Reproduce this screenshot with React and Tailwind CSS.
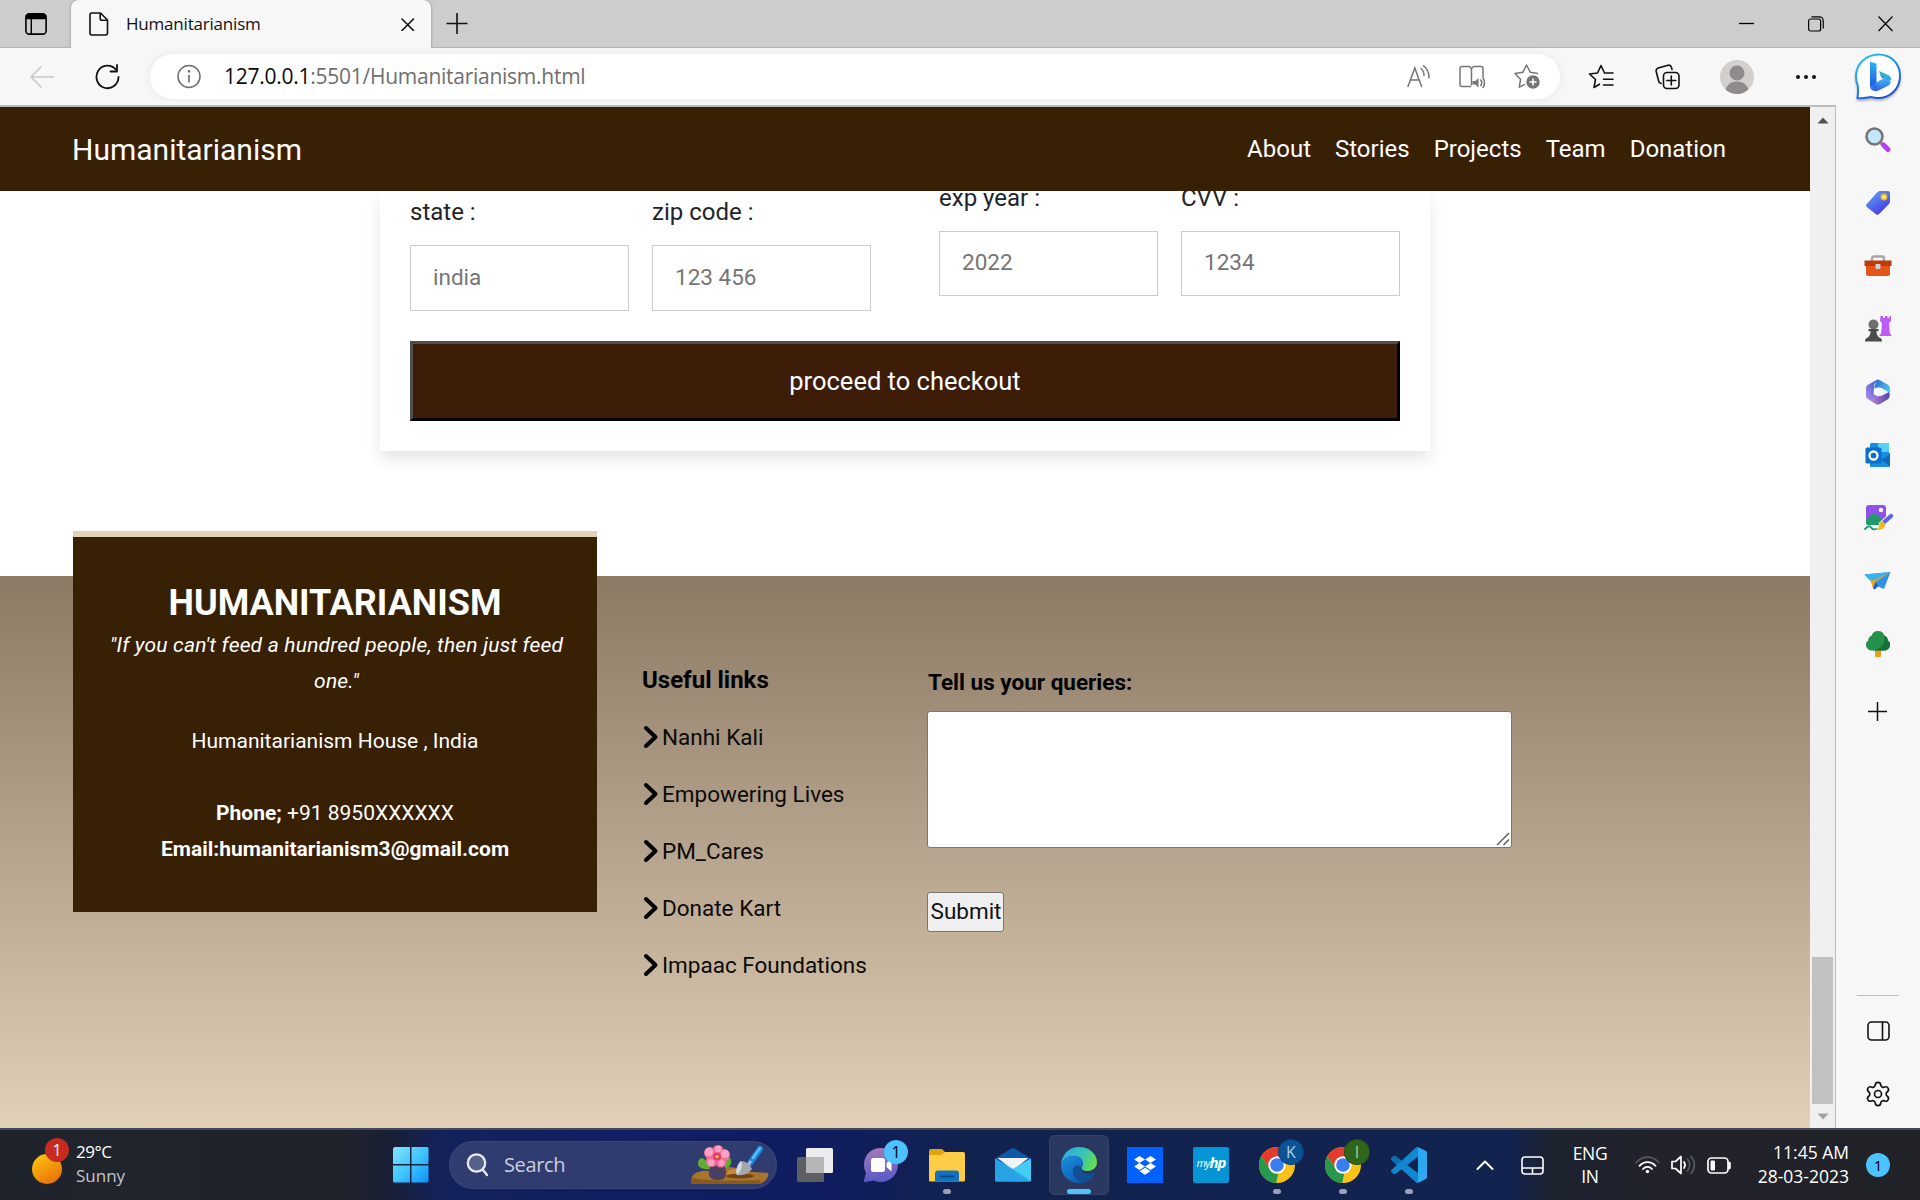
import React from "react";
import { Settings } from "lucide-react";

/* ---------- browser chrome ---------- */

function TabStrip() {
  return (
    <div className="flex h-12 shrink-0 bg-[#cdcdcd]">
      <div className="flex w-[71px] items-center pl-[25px] shadow-[inset_0_-2px_1px_-1px_#b4b4b4]">
        <svg width="22" height="22" viewBox="0 0 22 22" fill="none">
          <rect x="0.9" y="0.9" width="20.2" height="20.2" rx="3.4" stroke="#000" strokeWidth="1.6" />
          <path d="M0.9 6.2V4.3A3.4 3.4 0 0 1 4.3.9h13.4a3.4 3.4 0 0 1 3.4 3.4v1.9z" fill="#000" />
          <path d="M6.3 6v15" stroke="#000" strokeWidth="1.4" />
        </svg>
      </div>
      <div className="flex w-[360px] items-center rounded-t-[8px] bg-[#f7f7f7] pl-[18px] shadow-[0_0_3px_rgba(0,0,0,0.35)] [clip-path:inset(0_-4px_0_-4px)]">
        <svg width="20" height="24" viewBox="0 0 20 24" fill="none" stroke="#111" strokeWidth="1.6" strokeLinejoin="round">
          <path d="M1 3a2 2 0 0 1 2-2h8.5L18.5 8v13a2 2 0 0 1-2 2H3a2 2 0 0 1-2-2z" />
          <path d="M11.2 1v5.400a1.800 1.800 0 0 0 1.800 1.800h5.500" />
        </svg>
        <span className="ml-[17px] w-[275px] text-[17px] leading-6 tracking-[-0.2px] text-[#111]">Humanitarianism</span>
        <svg width="14" height="14" viewBox="0 0 14 14" stroke="#111" strokeWidth="1.6" strokeLinecap="round">
          <path d="M1 2l11.5 11.500M12.500 2L1 13.500" />
        </svg>
      </div>
      <div className="flex grow items-center pl-[15px] shadow-[inset_0_-2px_1px_-1px_#b4b4b4]">
        <svg width="22" height="22" viewBox="0 0 22 22" stroke="#111" strokeWidth="1.6">
          <path d="M11 0v21M0.500 10.500h21" />
        </svg>
        <div className="ml-auto flex items-center pr-[27px]">
          <svg className="mr-[54px]" width="15" height="16" viewBox="0 0 15 16" stroke="#000" strokeWidth="1.3">
            <path d="M0 7.500h15" />
          </svg>
          <svg className="mr-[54px]" width="16" height="16" viewBox="0 0 16 16" fill="none" stroke="#000" strokeWidth="1.2">
            <rect x="0.600" y="3" width="12" height="12" rx="2" />
            <path d="M3.500 .8h8a3.700 3.700 0 0 1 3.700 3.700v8" />
          </svg>
          <svg width="15" height="16" viewBox="0 0 15 16" stroke="#000" strokeWidth="1.2">
            <path d="M0.500 .5l14 14.500M14.500 .5L0.500 15" />
          </svg>
        </div>
      </div>
    </div>
  );
}

function BingLogo() {
  return (
    <svg width="49" height="50" viewBox="0 0 49 50" fill="none" className="drop-shadow-[0_2px_1px_rgba(0,0,0,0.25)]">
      <defs>
        <linearGradient id="bingRing" x1="0.1" y1="0" x2="0.700" y2="1">
          <stop offset="0" stopColor="#28c9ef" />
          <stop offset="0.600" stopColor="#2480ea" />
          <stop offset="1" stopColor="#1b50d0" />
        </linearGradient>
        <linearGradient id="bingB" x1="0" y1="0" x2="0" y2="1">
          <stop offset="0" stopColor="#2fb4f5" />
          <stop offset="1" stopColor="#1c4fe0" />
        </linearGradient>
        <linearGradient id="bingLeaf" x1="0" y1="1" x2="1" y2="0">
          <stop offset="0" stopColor="#2a7bf0" />
          <stop offset="1" stopColor="#38dfc6" />
        </linearGradient>
      </defs>
      <path
        d="M24.500 1.500C37 1.500 46 10.500 46 23S36.500 45 24 45c-3 0-5-.4-7-1-5 1-9 1.500-13.500 1 .8-5 1-7 .3-12C2.800 30 2 27 2 23.500 2 11 12 1.500 24.500 1.500z"
        fill="#fff"
        stroke="url(#bingRing)"
        strokeWidth="2"
      />
      <path d="M16 8.500l6.500 2.300V36L16 33z" fill="url(#bingB)" />
      <path d="M25 18l9.500 4c2 1 3 3 2.500 5.500L29 25.500 27 24z" fill="url(#bingLeaf)" />
      <path d="M16 33l8 -4.500 7-4 4 2c2.200 1.300 2 4.500-.5 6L24.500 37.500c-4 2-8.500-.5-8.500-4.500z" fill="url(#bingB)" opacity="0.9" />
    </svg>
  );
}

function Toolbar() {
  return (
    <div className="shrink-0 bg-[#f7f7f7]">
      <div className="flex h-[57px] items-center">
        <div className="flex w-[150px] items-center pl-[30px]">
          <svg width="24" height="22" viewBox="0 0 24 22" fill="none" stroke="#c9c9c9" strokeWidth="1.7" strokeLinecap="round" strokeLinejoin="round">
            <path d="M11 1L1 11l10 10M1 11h22.500" />
          </svg>
          <svg className="ml-[41px]" width="25" height="26" viewBox="0 0 25 26" fill="none" stroke="#111" strokeWidth="1.8" strokeLinecap="round">
            <path d="M23.500 13A11 11.300 0 1 1 20.800 5.500" />
            <path d="M22 1v6.500h-6.500" strokeLinejoin="round" />
          </svg>
        </div>
        <div className="flex h-[45px] w-[1410px] items-center rounded-full bg-white pl-[27px] pr-[20px] shadow-[0_0_8px_rgba(0,0,0,0.07)]">
          <svg width="24" height="25" viewBox="0 0 24 25" fill="none" stroke="#6e6e6e" strokeWidth="1.5">
            <circle cx="12" cy="12.500" r="11" />
            <path d="M12 11v7.500" strokeWidth="1.7" />
            <circle cx="12" cy="7.300" r="0.600" fill="#6e6e6e" />
          </svg>
          <p className="mb-px ml-[23px] text-[21px] leading-8 tracking-[-0.26px] text-[#6f6f6f]">
            <span className="text-[#0a0a0a]">127.0.0.1</span>:5501/Humanitarianism.html
          </p>
          <div className="ml-auto flex items-center gap-[28px]">
            <svg width="24" height="23" viewBox="0 0 24 23" fill="none" stroke="#757575" strokeWidth="1.500" strokeLinecap="round">
              <path d="M1 21.500L7.800 3l6.800 18.500M3.500 15h8.700" />
              <path d="M14 3.500c2 1.500 3 4 3 7M16.500 .8c4 2.500 5.500 7 5.500 12" />
            </svg>
            <svg width="27" height="24" viewBox="0 0 27 24" fill="none" stroke="#757575" strokeWidth="1.500" strokeLinejoin="round">
              <path d="M12 21.500H3a2 2 0 0 1-2-2v-16a2 2 0 0 1 2-2h7.500l2 2 2-2H22a2 2 0 0 1 2 2v9M12.500 3.500v17" />
              <path d="M13.500 16h2.800l3.200-3v9.500l-3.200-3h-2.800z" fill="#757575" stroke="none" />
              <path d="M21.800 15c1.200 1.500 1.200 4 0 5.500M24 13c2 2.700 2 7 0 9.500" strokeLinecap="round" />
            </svg>
            <svg width="26" height="25" viewBox="0 0 26 25" fill="none" stroke="#757575" strokeWidth="1.500" strokeLinejoin="round">
              <path d="M24 9.500l-7.700-1.200L12.500 1 8.800 8.300.9 9.500l5.700 5.700-1.300 8L11 20.300" />
              <circle cx="19" cy="18" r="6.700" fill="#757575" stroke="none" />
              <path d="M19 14.500v7M15.500 18h7" stroke="#fff" />
            </svg>
          </div>
        </div>
        <div className="flex grow items-center pl-[28px]">
          <svg width="27" height="25" viewBox="0 0 27 25" fill="none" stroke="#111" strokeWidth="1.600" strokeLinejoin="round" strokeLinecap="round">
            <path d="M16.500 9L13 1.500 9.500 9 1.500 10l6 5.500L6 23.500l5.500-3.300M16.500 9H25M15.500 15.200H25M15.500 21H25" />
          </svg>
          <svg className="ml-[40px]" width="26" height="26" viewBox="0 0 26 26" fill="none" stroke="#111" strokeWidth="1.600" strokeLinecap="round">
            <path d="M6 19.500c-1.300-.3-2-1-2.300-2.200L1.200 7.500c-.4-1.800.4-3 2-3.500L13 1.300c1.700-.4 2.900.3 3.400 2L17 5.500" />
            <rect x="8.500" y="8.500" width="15.500" height="16" rx="3.500" />
            <path d="M16.300 12v9M11.800 16.500h9" />
          </svg>
          <svg className="ml-[39px]" width="34" height="34" viewBox="0 0 34 34">
            <defs>
              <clipPath id="avatarClip">
                <circle cx="17" cy="17" r="17" />
              </clipPath>
            </defs>
            <g clipPath="url(#avatarClip)">
              <rect width="34" height="34" fill="#d2d0ce" />
              <circle cx="17" cy="13" r="7.500" fill="#8f8b88" />
              <path d="M5 34c0-8 5-12.500 12-12.500S29 26 29 34z" fill="#8f8b88" />
            </g>
          </svg>
          <svg className="ml-[41px]" width="22" height="6" viewBox="0 0 22 6" fill="#111">
            <circle cx="3" cy="3" r="2" />
            <circle cx="11" cy="3" r="2" />
            <circle cx="19" cy="3" r="2" />
          </svg>
          <div className="-my-2 ml-[37px] translate-y-[1px]">
            <BingLogo />
          </div>
        </div>
      </div>
      <div className="h-[2px] w-[1836px] bg-[#bcbcbc]" />
    </div>
  );
}

/* ---------- edge sidebar ---------- */

const sideIcons = [
  <svg key="search" width="28" height="28" viewBox="0 0 28 28" fill="none">
    <path d="M17 17l4 4" stroke="#6b6b6b" strokeWidth="3" />
    <path d="M19.500 19l4.500 4.500" stroke="#b83df5" strokeWidth="5" strokeLinecap="round" />
    <circle cx="10.500" cy="10.500" r="8" fill="#c4e6fa" stroke="#767676" strokeWidth="2.600" />
  </svg>,
  <svg key="tag" width="28" height="28" viewBox="0 0 28 28" fill="none">
    <defs>
      <linearGradient id="tagG" x1="0" y1="0" x2="0.700" y2="1">
        <stop offset="0" stopColor="#62b0fb" />
        <stop offset="1" stopColor="#4435e0" />
      </linearGradient>
    </defs>
    <path d="M13 3.500c1-.8 2-1.500 3.500-1.500H24a2 2 0 0 1 2 2v8c0 1.500-.5 2.500-1.500 3.500L15 25c-1 1-2 1-3 .2L2.800 18c-1-.9-1-2.200 0-3z" fill="url(#tagG)" />
    <circle cx="20" cy="8" r="2.600" fill="#fff1a0" stroke="#f3bd1b" strokeWidth="1.700" />
  </svg>,
  <svg key="toolbox" width="28" height="28" viewBox="0 0 28 28" fill="none">
    <path d="M8 9V6.500a2 2 0 0 1 2-2h8a2 2 0 0 1 2 2V9" stroke="#a5a5a5" strokeWidth="2.400" />
    <rect x="2" y="12" width="24" height="12" rx="2" fill="#e5541b" />
    <path d="M0.500 8.500h27V14H.5z" fill="#bf3a0d" />
    <rect x="11.500" y="12" width="5" height="5" rx="1" fill="#d4d4d4" />
  </svg>,
  <svg key="games" width="28" height="28" viewBox="0 0 28 28" fill="none">
    <path d="M16.500 1h2.500v2h2V1h2.500v2h2V1H27v5l-2 2 .8 10 1.700 2.500V21H15.500v-.5l1.700-2.500.8-10-2-2z" fill="#bb5cf5" />
    <circle cx="9.500" cy="9.500" r="5" fill="#6e6e6e" />
    <path d="M4.500 14h10v2.200h-2.200c.2 3 1.200 4.800 3.200 6.800h-12c2-2 3-3.800 3.200-6.800H4.500zM1 26.500c0-3 1.500-4 3.500-4h10c2 0 3.500 1 3.500 4z" fill="#4b4b4b" />
  </svg>,
  <svg key="m365" width="28" height="28" viewBox="0 0 28 28" fill="none">
    <defs>
      <linearGradient id="mLeft" x1="0" y1="1" x2="0.800" y2="0">
        <stop offset="0" stopColor="#b48be6" />
        <stop offset="1" stopColor="#3c5fd0" />
      </linearGradient>
      <linearGradient id="mRight" x1="0" y1="0" x2="1" y2="0.600">
        <stop offset="0" stopColor="#2f62c4" />
        <stop offset="1" stopColor="#4ac8f2" />
      </linearGradient>
      <linearGradient id="mLow" x1="0" y1="0" x2="1" y2="0">
        <stop offset="0" stopColor="#c08ae0" />
        <stop offset="1" stopColor="#5547a6" />
      </linearGradient>
    </defs>
    <path d="M4.500 21.400L12.500 26.300q1.500.8 3 0L23.500 21.500C25.500 20.300 26.500 17 25 14l-8 4-7-1.500z" fill="url(#mLow)" />
    <path d="M12.500 2q1.500-.8 3 0l8 4.500C25.200 7.500 26 8.700 26 10.500v7c0-2-1-3-2.500-4L18 10.300c-2-1-4-1.300-8 .2z" fill="url(#mRight)" />
    <path d="M12.500 2L4.500 6.500C2.800 7.500 2 8.700 2 10.500v7.500c0 1.800 1.200 3.200 3 3.600 3 .5 5-1.300 5-4.600V10c0-4 1-6 4-8z" fill="url(#mLeft)" />
    <path d="M14 9.500l4.300 2.500v4L14 18.500 9.700 16v-4z" fill="#f7f7f7" />
  </svg>,
  <svg key="outlook" width="28" height="28" viewBox="0 0 28 28" fill="none">
    <rect x="6" y="2" width="19" height="14" rx="1.500" fill="#1a8fe0" />
    <path d="M14 2h11v9H14z" fill="#56d0f7" />
    <path d="M6 12h20v13a1 1 0 0 1-1 1H7a1 1 0 0 1-1-1z" fill="#1890df" />
    <path d="M26 13v12L17 19z" fill="#0f6bbb" />
    <rect x="1.500" y="6.500" width="16" height="16" rx="1.500" fill="#0a6fcf" />
    <circle cx="9.500" cy="14.500" r="4" stroke="#fff" strokeWidth="2.300" />
  </svg>,
  <svg key="image" width="30" height="28" viewBox="0 0 30 28" fill="none">
    <rect x="3" y="1" width="20" height="20" rx="3" fill="#9150ea" />
    <circle cx="18" cy="6" r="2.200" fill="#fff" />
    <path d="M3 16l6-5.500c1.500-1.200 3-1.200 4.500 0L21 17l-3 4H5.500A2.500 2.500 0 0 1 3 18.500z" fill="#209a68" />
    <path d="M2 25c3-3 4.500-3.500 5.500-2s2.500 3 6 2" stroke="#169a6c" strokeWidth="1.800" strokeLinecap="round" />
    <path d="M28 12L19 20" stroke="#f7f7f7" strokeWidth="6" strokeLinecap="round" />
    <path d="M28 12L19 20" stroke="#5d63f0" strokeWidth="4.200" strokeLinecap="round" />
    <path d="M19.500 17l3 3.500c-1 4-5 6-9.500 5.500 2-1 2.500-2 3-4 .5-2.500 1.500-4 3.500-5z" fill="#f3b61e" />
  </svg>,
  <svg key="plane" width="28" height="28" viewBox="0 0 28 28" fill="none">
    <path d="M26.500 5L20 22l-6-2.500-3.500 3L8 15.500.5 7.500z" fill="#3292ea" />
    <path d="M.5 7.500L26.500 5 8 15.500z" fill="#38b3ee" />
    <path d="M26.500 5L10 13.500 6 12l3 9.500 2.500-6.500z" fill="#f0a11e" />
    <path d="M9 21.500l2.500-6.500 3 3.500-4 4z" fill="#1f5fc0" />
  </svg>,
  <svg key="tree" width="28" height="28" viewBox="0 0 28 28" fill="none">
    <rect x="11" y="19" width="6" height="8" rx="1" fill="#eb9a22" />
    <path d="M14 1c3.500 0 5.500 2 6.200 4.500C23 6.500 23.800 8.500 23.700 10.500 25.500 11.500 26 13 26 14.500c0 4-3 6-6.500 6h-11c-3.500 0-6.500-2-6.500-6 0-1.500.5-3 2.300-4-.1-2 .7-4 3.500-5C8.500 3 10.500 1 14 1z" fill="#23914a" />
    <path d="M20.200 5.500C23 6.500 23.800 8.500 23.700 10.500 25.500 11.500 26 13 26 14.500c0 4-3 6-6.500 6h-11C18 19 22 13 20.200 5.500z" fill="#17703a" />
  </svg>,
];

function Sidebar() {
  return (
    <aside className="flex w-[84px] shrink-0 flex-col items-center bg-[#f7f7f7] pt-[19px]">
      <div className="flex flex-col items-center gap-[35px]">{sideIcons}</div>
      <svg className="mr-[2px] mt-[44px]" width="19" height="19" viewBox="0 0 19 19" stroke="#111" strokeWidth="1.500">
        <path d="M9.500 0v19M0 9.500h19" />
      </svg>
      <div className="mt-auto h-px w-[42px] bg-[#bdbdbd]" />
      <svg className="mt-[25px]" width="23" height="20" viewBox="0 0 23 20" fill="none" stroke="#111" strokeWidth="1.600">
        <rect x="1" y="1" width="21" height="18" rx="3.500" />
        <path d="M15.500 1v18" />
      </svg>
      <Settings className="mb-5 mt-[39px]" size={28} strokeWidth={1.400} color="#111" />
    </aside>
  );
}

function Scrollbar() {
  return (
    <div className="flex w-[26px] shrink-0 flex-col items-center border-r border-[#bcbcbc] bg-[#f0f0f0]">
      <svg className="mt-[10px]" width="12" height="7" viewBox="0 0 12 7" fill="#505050">
        <path d="M6 0.500l5.500 6H.5z" />
      </svg>
      <div className="mt-auto h-[147px] w-[21px] bg-[#c1c1c1]" />
      <svg className="mb-[8px] mt-[9px]" width="12" height="7" viewBox="0 0 12 7" fill="#a3a3a3">
        <path d="M6 6.500L.5 .5h11z" />
      </svg>
    </div>
  );
}

/* ---------- web page ---------- */

function Field({ label, placeholder, box }) {
  return (
    <label className="flex w-[219px] flex-col gap-[15px] text-2xl leading-9 text-[#212529]">
      <span>{label}</span>
      <input
        type="text"
        placeholder={placeholder}
        className={box + " w-full border border-[#cccccc] bg-white px-[22px] pb-[3px] text-[22.5px] placeholder:text-[#757575]"}
      />
    </label>
  );
}

function CheckoutCard() {
  return (
    <section className="mx-auto flex h-[260px] w-[1050px] flex-col bg-white px-[30px] shadow-[0_8px_15px_rgba(0,0,0,0.1)]">
      <div className="flex h-[150px] justify-between">
        <div className="flex gap-[23px] pt-[3px]">
          <Field label="state :" placeholder="india" box="h-[66px]" />
          <Field label="zip code :" placeholder="123 456" box="h-[66px]" />
        </div>
        <div className="-mt-[11px] flex gap-[23px]">
          <Field label="exp year :" placeholder="2022" box="h-[65px]" />
          <Field label="CVV :" placeholder="1234" box="h-[65px]" />
        </div>
      </div>
      <button className="h-20 w-full border-[3px] border-b-black border-l-[#4f4f4f] border-r-black border-t-[#4f4f4f] bg-[#3d1d08] text-[25.5px] text-white">
        proceed to checkout
      </button>
    </section>
  );
}

const links = ["Nanhi Kali", "Empowering Lives", "PM_Cares", "Donate Kart", "Impaac Foundations"];

function Footer() {
  return (
    <footer className="flex h-[552px] bg-linear-to-b from-[#8c7a65] to-[#e2d0b8] pl-[73px]">
      <div className="-mt-[45px] h-[381px] w-[524px] border-t-[6px] border-[#e4d0b5] bg-[#382004] px-[30px] pt-[45px] text-center text-[21px] leading-9 text-white">
        <h3 className="mb-[3px] text-4xl font-bold leading-[42px]">HUMANITARIANISM</h3>
        <p className="-mx-2 pl-[3px] italic tracking-[0.2px]">
          "If you can't feed a hundred people, then just feed
          <br />
          one."
        </p>
        <p className="mt-6">Humanitarianism House , India</p>
        <p className="mt-9">
          <strong className="font-bold">Phone;</strong> +91 8950XXXXXX
        </p>
        <p className="font-bold">Email:humanitarianism3@gmail.com</p>
      </div>
      <div className="ml-[45px] w-[285px] pt-[86px]">
        <h4 className="text-2xl font-bold leading-9 text-black">Useful links</h4>
        <ul className="mt-[21px] flex flex-col gap-[21px] text-[22.5px] leading-9 text-[#0c0a08]">
          {links.map((name) => (
            <li key={name} className="flex items-center">
              <svg className="ml-px mr-[3px]" width="16" height="24" viewBox="0 0 16 24" fill="none" stroke="#000" strokeWidth="4" strokeLinecap="round" strokeLinejoin="round">
                <path d="M3 3l9.500 9L3 21" />
              </svg>
              {name}
            </li>
          ))}
        </ul>
      </div>
      <div className="flex w-[585px] flex-col items-start pt-[89px]">
        <h4 className="pl-px text-[22.5px] font-bold leading-[34px] text-black">Tell us your queries:</h4>
        <div className="relative mt-3 h-[137px] w-full">
          <textarea className="block h-full w-full resize-none rounded-[3px] border border-[#767676] bg-white" />
          <svg className="absolute bottom-[2px] right-[2px]" width="14" height="14" viewBox="0 0 14 14" stroke="#555" strokeWidth="1.400">
            <path d="M1 13L13 1M7.500 13L13 7.500" />
          </svg>
        </div>
        <button className="mt-[44px] h-10 w-[77px] rounded-[3px] border border-[#767676] bg-[#efefef] pb-[2px] pl-px text-[22.5px] leading-none text-[#111]">
          Submit
        </button>
      </div>
    </footer>
  );
}

function WebPage() {
  return (
    <main className="flex w-[1810px] shrink-0 flex-col overflow-hidden bg-white font-[Roboto,sans-serif]">
      <nav className="z-10 flex h-[84px] shrink-0 items-center justify-between bg-[#382004] pl-[72px] pr-[84px] text-white">
        <span className="pt-px text-3xl">Humanitarianism</span>
        <div className="flex gap-6 text-2xl">
          <span>About</span>
          <span>Stories</span>
          <span>Projects</span>
          <span>Team</span>
          <span>Donation</span>
        </div>
      </nav>
      <div className="h-[385px] shrink-0">
        <CheckoutCard />
      </div>
      <Footer />
    </main>
  );
}

/* ---------- taskbar ---------- */

function CountBadge({ children, tone, place }) {
  return (
    <span className={"absolute flex size-6 items-center justify-center rounded-full text-[16px] leading-none " + tone + " " + place}>
      {children}
    </span>
  );
}

function Chrome({ id, letter, tone }) {
  return (
    <div className="relative">
      <svg width="36" height="36" viewBox="0 0 36 36">
        <defs>
          <clipPath id={id}>
            <circle cx="18" cy="18" r="18" />
          </clipPath>
        </defs>
        <g clipPath={"url(#" + id + ")"}>
          <rect width="36" height="36" fill="#fbc116" />
          <path d="M0 0h36v10H18L10.500 22 2.400 9z" fill="#e33b2e" />
          <path d="M2.400 9l8.400 13.200c2 3 5 4.300 8.500 3.800L17 37H0V9z" fill="#27994b" />
        </g>
        <circle cx="18" cy="18" r="8.700" fill="#fff" />
        <circle cx="18" cy="18" r="6.800" fill="#3a7df0" />
      </svg>
      <CountBadge tone={tone} place="-top-[7px] left-5">{letter}</CountBadge>
    </div>
  );
}

function AppSlot({ children, mark, active }) {
  return (
    <div className={"flex h-[60px] w-[60px] flex-col items-center rounded-md pt-3 " + (active ? "bg-white/10 ring-1 ring-inset ring-white/5" : "")}>
      {children}
      <span className={"mt-[6px] h-[5px] rounded-full " + (mark || "w-0")} />
    </div>
  );
}

function Flower() {
  return (
    <svg width="80" height="40" viewBox="0 0 80 40" fill="none">
      <path d="M1 39c0-6 1-11 8-12 8-3 12 1 20-2 8-4 14-4 20 0 8 2 20 2 29 3 2 3-4 11-10 11z" fill="#a8752c" />
      <path d="M38 26c6-3 12-3 15 0l6 2-8 3H36z" fill="#c98a38" />
      <path d="M1 39c0-3 0-4 1-6 15 3 40 3 68 2 2 1 0 3-2 4z" fill="#8a5a1d" />
      <ellipse cx="50" cy="31" rx="14" ry="2.500" fill="#714513" />
      <path d="M24 24C15 25 8 24 8 18c0-3 2-5 4-5 4 2 9 5 12 11zM30 24c8 0 12-3 11-9-1-3-2-3-4-3-3 3-6 6-7 12z" fill="#5fae33" />
      <path d="M20 19h15c-1 4 2 6 1 11-1 4-3 5-8 5s-8-1-9-5c-1-5 2-7 1-11z" fill="#4b405f" />
      <ellipse cx="27.500" cy="19.500" rx="7.500" ry="1.500" fill="#2e2741" />
      <g fill="#f46c9b">
        <circle cx="20" cy="8" r="6" />
        <circle cx="28" cy="5.500" r="5.500" />
        <circle cx="34" cy="10" r="6" />
        <circle cx="31" cy="17" r="5.500" />
        <circle cx="22" cy="16" r="6" />
      </g>
      <g fill="#fba3c2">
        <circle cx="19" cy="7" r="4.200" />
        <circle cx="28" cy="4" r="3.200" />
        <circle cx="35" cy="9" r="4" />
        <circle cx="21" cy="17.500" r="3.500" />
        <circle cx="31.500" cy="18" r="3" />
      </g>
      <circle cx="27" cy="11.500" r="4" fill="#e23d63" />
      <circle cx="27" cy="11.500" r="1.600" fill="#f9c73b" />
      <path d="M70 4L60 18" stroke="#1d86dc" strokeWidth="6" strokeLinecap="round" />
      <path d="M70 3L63 13" stroke="#5cbcfa" strokeWidth="2.500" strokeLinecap="round" />
      <path d="M61 16l-4 6" stroke="#b8bcc2" strokeWidth="2.500" />
      <path d="M51 16c4 0 9 3 11 8-3 4-8 7-15 6-2-4 0-10 4-14z" fill="#a2a8ae" />
      <path d="M51 16c2 4 1 9-4 14-2-4 0-10 4-14z" fill="#d5d9dd" />
    </svg>
  );
}

function Taskbar() {
  return (
    <div className="flex h-[72px] shrink-0 items-center border-t-2 border-[#444858] bg-[linear-gradient(90deg,#1f242c_0px,#21232c_340px,#191f35_390px,#14225a_440px,#111e62_620px,#101c60_820px,#12224f_960px,#12234f_1510px,#1d2230_1550px,#21222b_1650px,#212228_1920px)] text-white">
      <div className="flex w-[393px] items-center pb-px pl-8">
        <div className="relative pt-2">
          <svg width="30" height="30" viewBox="0 0 30 30">
            <defs>
              <linearGradient id="sun" x1="0.200" y1="0" x2="0.800" y2="1">
                <stop offset="0" stopColor="#fcc50a" />
                <stop offset="1" stopColor="#ea6a0a" />
              </linearGradient>
            </defs>
            <circle cx="15" cy="15" r="15" fill="url(#sun)" />
          </svg>
          <CountBadge tone="bg-[#c52b20] text-white" place="-top-2 left-[13px]">1</CountBadge>
        </div>
        <div className="ml-[14px] flex flex-col pb-px text-[17px] leading-6">
          <span className="tracking-[-0.5px]">29°C</span>
          <span className="text-[#c3c4c8]">Sunny</span>
        </div>
      </div>
      <svg width="36" height="36" viewBox="0 0 36 36">
        <defs>
          <linearGradient id="win" x1="0" y1="0" x2="1" y2="1">
            <stop offset="0" stopColor="#86e3fc" />
            <stop offset="0.500" stopColor="#3fc6fb" />
            <stop offset="1" stopColor="#0a93fb" />
          </linearGradient>
        </defs>
        <path d="M1.500 0H17v17H0V1.500zM18.500 0H34a1.500 1.500 0 0 1 1.500 1.500V17h-17zM0 18.500h17v17H1.500A1.500 1.500 0 0 1 0 34zM18.500 18.500h17V34a1.500 1.500 0 0 1-1.500 1.500H18.500z" fill="url(#win)" />
      </svg>
      <div className="ml-5 mr-px flex h-12 w-[328px] items-center rounded-full border border-white/5 bg-[#303b70] pl-4">
        <svg width="23" height="24" viewBox="0 0 23 24" fill="none" stroke="#e9eaf0" strokeWidth="2.300" strokeLinecap="round">
          <circle cx="10.500" cy="10" r="8.700" fill="#55608d" />
          <path d="M17 17l4 5" />
        </svg>
        <span className="ml-[15px] text-[20px] tracking-[-0.35px] text-[#cdcfdc]">Search</span>
        <div className="ml-auto mr-[6px]">
          <Flower />
        </div>
      </div>
      <div className="-mt-px ml-[7px] flex gap-[6px]">
        <AppSlot>
          <svg width="36" height="36" viewBox="0 0 36 36">
            <rect x="0" y="10" width="27" height="25" rx="1.500" fill="#5d5f63" />
            <rect x="9" y="1" width="27" height="25" rx="1.500" fill="#ececee" />
            <path d="M9 10h18v16H9z" fill="#b5b6b8" />
          </svg>
        </AppSlot>
        <AppSlot>
          <div className="relative">
            <svg width="36" height="36" viewBox="0 0 36 36">
              <defs>
                <linearGradient id="chat" x1="0.500" y1="0" x2="0.600" y2="1">
                  <stop offset="0" stopColor="#a07ab8" />
                  <stop offset="1" stopColor="#5559c8" />
                </linearGradient>
              </defs>
              <path d="M18 1c10 0 17 7 17 16.500S28 35 18 35c-3 0-5-.5-7-1.500L2 35c-1 0-1.300-.5-1-1.500l2-7.500C1.700 23.500 1 21 1 18 1 8 8 1 18 1z" fill="url(#chat)" />
              <rect x="8" y="11" width="14" height="14" rx="2.500" fill="#fff" />
              <path d="M23.500 16l5-4.500v13l-5-4.500z" fill="#fff" />
            </svg>
            <CountBadge tone="bg-[#4cc2ff] text-black" place="-top-[7px] left-[21px]">1</CountBadge>
          </div>
        </AppSlot>
        <AppSlot mark="w-2 bg-[#9aa0b8]">
          <svg width="36" height="36" viewBox="0 0 36 36">
            <path d="M0 4a2 2 0 0 1 2-2h11l3 3-3 5H0z" fill="#e2a310" />
            <path d="M0 8h12l4-3h18a2 2 0 0 1 2 2v26a1.500 1.500 0 0 1-1.500 1.500h-33A1.500 1.500 0 0 1 0 33z" fill="#fdce45" />
            <path d="M6 34.500v-8a3 3 0 0 1 3-3h18a3 3 0 0 1 3 3v8z" fill="#1272bd" />
            <path d="M11.500 29.500h13" stroke="#0c4d89" strokeWidth="2" strokeLinecap="round" />
          </svg>
        </AppSlot>
        <AppSlot>
          <svg width="36" height="36" viewBox="0 0 36 36">
            <path d="M0 11.500L16.500 1.500a3 3 0 0 1 3 0L36 11.500 18 24z" fill="#0e58a8" />
            <path d="M2.500 11h31L18 23z" fill="#f1f2f4" />
            <path d="M0 11.500L18 22l18-10.500V33a1.500 1.500 0 0 1-1.500 1.500h-33A1.500 1.500 0 0 1 0 33z" fill="#2bb5ec" />
            <path d="M0 33V11.500L34.500 34.500H1.500A1.500 1.500 0 0 1 0 33z" fill="#28a3e6" />
            <path d="M36 11.500V34L18 22z" fill="#44cdf6" />
          </svg>
        </AppSlot>
        <AppSlot active mark="w-6 bg-[#4cc2ff]">
          <svg width="36" height="36" viewBox="0 0 36 36">
            <defs>
              <linearGradient id="edgeTop" x1="0" y1="0.300" x2="1" y2="0.600">
                <stop offset="0" stopColor="#2aa9e6" />
                <stop offset="0.550" stopColor="#36c3b8" />
                <stop offset="1" stopColor="#66df4a" />
              </linearGradient>
              <linearGradient id="edgeLow" x1="0" y1="0" x2="0.600" y2="1">
                <stop offset="0" stopColor="#1b8fdd" />
                <stop offset="1" stopColor="#0d5fb8" />
              </linearGradient>
            </defs>
            <path d="M0 18C.5 7.500 8 0 18 0c11 0 18 7.500 18 15 0 5.500-4 9-9 9-4.500 0-6.500-1.500-6.500-3 0-1 1.500-2 1.500-4.500 0-4-4-7.500-9-7.500C7 9 2 12 0 18z" fill="url(#edgeTop)" />
            <path d="M0 18C2 12 7 9 13 9c5 0 9 3.500 9 7.500 0 2.500-1.500 3.500-1.500 4.500-2-4-8-3-8.500 2-.5 6 5 12.500 12 12.500C22 36 20 36 18 36 8 36-.5 28 0 18z" fill="url(#edgeLow)" />
            <path d="M12 23c.5-5 6.500-6 8.500-2 0 5.500 7 7.500 12.500 4.500 1-.5 1.500 0 1 1-2 4-6 7.500-10 9C17 35.500 11.500 29 12 23z" fill="#124f94" />
          </svg>
        </AppSlot>
        <AppSlot>
          <svg width="36" height="36" viewBox="0 0 36 36">
            <rect width="36" height="36" fill="#0061fe" />
            <path d="M12.500 9l5.500 3.500-5.500 3.500L7 12.500zM23.500 9l5.500 3.500-5.500 3.500-5.500-3.500zM12.500 16l5.500 3.500-5.500 3.500L7 19.500zM23.500 16l5.500 3.500-5.500 3.500-5.500-3.500zM18 20.700l5.500 3.500L18 27.700l-5.500-3.500z" fill="#fff" />
          </svg>
        </AppSlot>
        <AppSlot>
          <div className="flex size-9 items-center justify-center rounded-[2px] bg-[#0395d5] pb-1 font-['Open_Sans',sans-serif] italic leading-none">
            <span className="text-[11px] tracking-[-0.8px]">my</span>
            <span className="text-[15px] font-bold tracking-[-1px]">hp</span>
          </div>
        </AppSlot>
        <AppSlot mark="w-2 bg-[#9aa0b8]">
          <Chrome id="chromeK" letter="K" tone="bg-[#0b5394] text-[#a9cdea] ring-1 ring-[#0a3f78]" />
        </AppSlot>
        <AppSlot mark="w-2 bg-[#9aa0b8]">
          <Chrome id="chromeI" letter="I" tone="bg-[#2f661c] text-[#a9cf98] ring-1 ring-[#234f14]" />
        </AppSlot>
        <AppSlot mark="w-2 bg-[#9aa0b8]">
          <svg width="36" height="36" viewBox="0 0 24 24">
            <path
              d="M23.150 2.587L18.210.21a1.494 1.494 0 0 0-1.705.29l-9.460 8.630-4.120-3.128a.999.999 0 0 0-1.276.057L.327 7.261A1 1 0 0 0 .326 8.740L3.899 12 .326 15.260a1 1 0 0 0 .001 1.479L1.650 17.940a.999.999 0 0 0 1.276.057l4.120-3.128 9.460 8.630a1.492 1.492 0 0 0 1.704.29l4.942-2.377A1.500 1.500 0 0 0 24 20.060V3.939a1.500 1.500 0 0 0-.85-1.352zm-5.146 14.861L10.826 12l7.178-5.448v10.896z"
              fill="#1286cf"
            />
            <path d="M18.004 0.200l5.146 2.387A1.500 1.500 0 0 1 24 3.939V20.060a1.500 1.500 0 0 1-.85 1.352L18.004 23.800z" fill="#2ba8f1" />
            <path d="M.326 8.740a1 1 0 0 1 0-1.479l1.323-1.202a1 1 0 0 1 1.276-.057L7.045 9.130 3.899 12z" fill="#0b6fb8" />
          </svg>
        </AppSlot>
      </div>
      <div className="ml-auto flex items-center pr-[30px]">
        <svg width="18" height="12" viewBox="0 0 18 12" fill="none" stroke="#fff" strokeWidth="2" strokeLinecap="round" strokeLinejoin="round">
          <path d="M1.500 10L9 2.500l7.500 7.500" />
        </svg>
        <svg className="ml-[27px]" width="23" height="19" viewBox="0 0 23 19" fill="none" stroke="#fff" strokeWidth="1.600">
          <rect x="1" y="1" width="21" height="17" rx="3" />
          <path d="M1 12h21M11.500 12v6" />
        </svg>
        <div className="ml-[28px] mr-px w-9 pb-px text-center text-[17.5px] leading-[23px] tracking-[-0.4px]">
          ENG
          <br />
          IN
        </div>
        <svg className="ml-[26px]" width="25" height="18" viewBox="0 0 25 18" fill="none" stroke="#fff" strokeWidth="1.800" strokeLinecap="round">
          <path d="M1.200 6.500C7.500-.6 17.500-.6 23.800 6.500" stroke="#565a66" />
          <path d="M4.500 9.800c4.500-5 11.500-5 16 0M8 13c2.500-2.800 6.500-2.800 9 0" />
          <circle cx="12.500" cy="15.500" r="1.700" fill="#fff" stroke="none" />
        </svg>
        <svg className="ml-[11px]" width="25" height="20" viewBox="0 0 25 20" fill="none" stroke="#fff" strokeWidth="1.700" strokeLinecap="round" strokeLinejoin="round">
          <path d="M1 6.500h3.500L10 1.500v17L4.500 13.500H1z" />
          <path d="M13 7c1.300 1.800 1.300 4.200 0 6" />
          <path d="M16.500 4c3 3.500 3 8.500 0 12M20 1.500c4.500 5 4.500 12 0 17" stroke="#565a66" />
        </svg>
        <svg className="ml-[11px]" width="25" height="17" viewBox="0 0 25 17" fill="none" stroke="#fff" strokeWidth="1.700">
          <rect x="1" y="1" width="20" height="15" rx="3.500" />
          <path d="M22.500 6v5" strokeWidth="2.500" strokeLinecap="round" />
          <rect x="3.500" y="3.500" width="4.500" height="10" rx="1.200" fill="#fff" stroke="none" />
        </svg>
        <div className="ml-[17px] w-[100px] pb-[3px] text-right text-[17.5px] leading-6">
          11:45 AM
          <br />
          28-03-2023
        </div>
        <span className="ml-[17px] flex size-6 items-center justify-center rounded-full bg-[#4cc2ff] text-[15px] leading-none text-black">1</span>
      </div>
    </div>
  );
}

export default function App() {
  return (
    <div className="flex h-[1200px] w-[1920px] flex-col overflow-hidden font-['Open_Sans',sans-serif]">
      <TabStrip />
      <Toolbar />
      <div className="flex min-h-0 grow">
        <WebPage />
        <Scrollbar />
        <Sidebar />
      </div>
      <Taskbar />
    </div>
  );
}
